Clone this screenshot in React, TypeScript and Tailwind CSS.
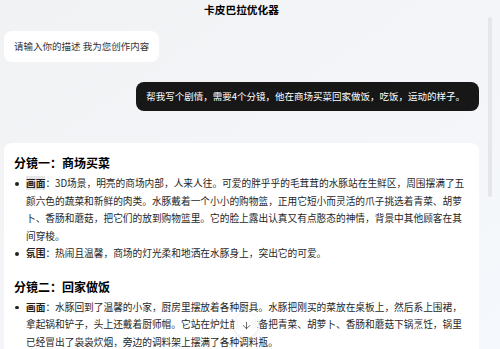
import { ArrowDown } from "lucide-react";

type Item = { label: string; text: string; mark?: boolean };

const scenes: { title: string; items: Item[] }[] = [
  {
    title: "分镜一：商场买菜",
    items: [
      {
        label: "画面",
        mark: true,
        text: "3D场景，明亮的商场内部，人来人往。可爱的胖乎乎的毛茸茸的水豚站在生鲜区，周围摆满了五颜六色的蔬菜和新鲜的肉类。水豚戴着一个小小的购物篮，正用它短小而灵活的爪子挑选着青菜、胡萝卜、香肠和蘑菇，把它们的放到购物篮里。它的脸上露出认真又有点憨态的神情，背景中其他顾客在其间穿梭。",
      },
      {
        label: "氛围",
        text: "热闹且温馨，商场的灯光柔和地洒在水豚身上，突出它的可爱。",
      },
    ],
  },
  {
    title: "分镜二：回家做饭",
    items: [
      {
        label: "画面",
        text: "水豚回到了温馨的小家，厨房里摆放着各种厨具。水豚把刚买的菜放在桌板上，然后系上围裙，拿起锅和铲子，头上还戴着厨师帽。它站在炉灶前，准备把青菜、胡萝卜、香肠和蘑菇下锅烹饪，锅里已经冒出了袅袅炊烟，旁边的调料架上摆满了各种调料瓶。",
      },
    ],
  },
];

export default function App() {
  return (
    <div className="relative flex h-[349px] w-[500px] overflow-hidden bg-gradient-to-br from-[#f1f2f4] to-[#f5f8fc] font-['Noto_Sans_CJK_SC',sans-serif] text-[#1f1f1f]">
      {/* chat column */}
      <div className="flex w-[479px] flex-col pl-[4px]">
        <h1 className="h-[20px] text-center text-[10.7px] font-bold leading-[20px] text-black">
          卡皮巴拉优化器
        </h1>

        <div className="mt-[11px] flex">
          <div className="flex h-[31px] items-center rounded-lg bg-white px-[10px] text-[9.5px] text-[#333]">
            请输入你的描述 我为您创作内容
          </div>
        </div>

        <div className="mt-[20px] flex justify-end">
          <div className="flex h-[29px] items-center rounded-lg bg-[#171717] pl-[10px] pr-[14px] text-[9.5px] text-white">
            帮我写个剧情，需要4个分镜，他在商场买菜回家做饭，吃饭，运动的样子。
          </div>
        </div>

        <section className="mt-[32px] flex-1 rounded-t-lg bg-white pl-[10px] pr-[13px] pt-[11px]">
          {scenes.map((s, i) => (
            <div key={s.title} className={i > 0 ? "mt-[15px]" : ""}>
              <h2 className="text-[12px] font-bold leading-[18px] text-black">{s.title}</h2>
              <ul className="mt-[3px] flex flex-col">
                {s.items.map((it) => (
                  <li key={it.label + it.text.slice(0, 4)} className="flex text-[9.7px] leading-[17.5px]">
                    <span className="flex h-[17.5px] w-[12px] shrink-0 items-center pl-[1px]">
                      <span className="h-[3.5px] w-[3.5px] rounded-full bg-[#222]" />
                    </span>
                    <p>
                      <strong className={it.mark ? "bg-[#e6e6e6] font-bold" : "font-bold"}>{it.label}</strong>
                      ：{it.text}
                    </p>
                  </li>
                ))}
              </ul>
            </div>
          ))}
        </section>
      </div>

      {/* scrollbar */}
      <div className="flex w-[21px] justify-center pt-[17px]">
        <div className="h-[180px] w-[4px] rounded-full bg-[#e4e6e9]" />
      </div>

      {/* scroll-to-bottom button */}
      <button className="absolute left-[234px] top-[313px] flex h-[24px] w-[24px] items-center justify-center rounded-full bg-white/95 shadow-[0_1px_4px_rgba(0,0,0,0.12)]">
        <ArrowDown size={11} strokeWidth={1.6} className="text-[#333]" />
      </button>
    </div>
  );
}
